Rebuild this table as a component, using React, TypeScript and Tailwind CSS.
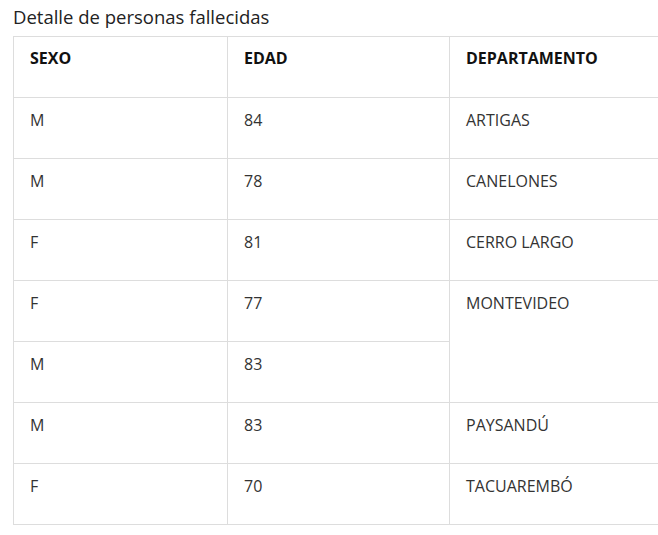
import React from "react";

type Row = { sexo: string; edad: string; dep?: string; span?: number };

const rows: Row[] = [
  { sexo: "M", edad: "84", dep: "ARTIGAS" },
  { sexo: "M", edad: "78", dep: "CANELONES" },
  { sexo: "F", edad: "81", dep: "CERRO LARGO" },
  { sexo: "F", edad: "77", dep: "MONTEVIDEO", span: 2 },
  { sexo: "M", edad: "83" },
  { sexo: "M", edad: "83", dep: "PAYSANDÚ" },
  { sexo: "F", edad: "70", dep: "TACUAREMBÓ" },
];

const base =
  "border border-[#dddddd] align-top text-left pl-4 pr-4 h-[61px] text-[16px] leading-5";
const td = `${base} pt-3`;
const th = `${base} pt-[11px] font-bold text-[#111111]`;

export default function App() {
  return (
    <div
      className="w-[658px] h-[535px] overflow-hidden bg-white"
      style={{ fontFamily: '"Open Sans", sans-serif' }}
    >
      <h3 className="pl-[13px] pt-[5px] h-[36px] text-[18.5px] leading-6 text-[#222222] font-normal">
        Detalle de personas fallecidas
      </h3>
      <div className="pl-[13px] overflow-hidden">
        <table className="border-collapse w-[700px] table-fixed text-[#333333]">
          <colgroup>
            <col className="w-[214px]" />
            <col className="w-[222px]" />
            <col />
          </colgroup>
          <thead>
            <tr>
              <th className={th}>SEXO</th>
              <th className={th}>EDAD</th>
              <th className={th}>DEPARTAMENTO</th>
            </tr>
          </thead>
          <tbody>
            {rows.map((r, i) => (
              <tr key={i}>
                <td className={td}>{r.sexo}</td>
                <td className={td}>{r.edad}</td>
                {r.dep !== undefined && (
                  <td className={td} rowSpan={r.span ?? 1}>
                    {r.dep}
                  </td>
                )}
              </tr>
            ))}
          </tbody>
        </table>
      </div>
    </div>
  );
}
